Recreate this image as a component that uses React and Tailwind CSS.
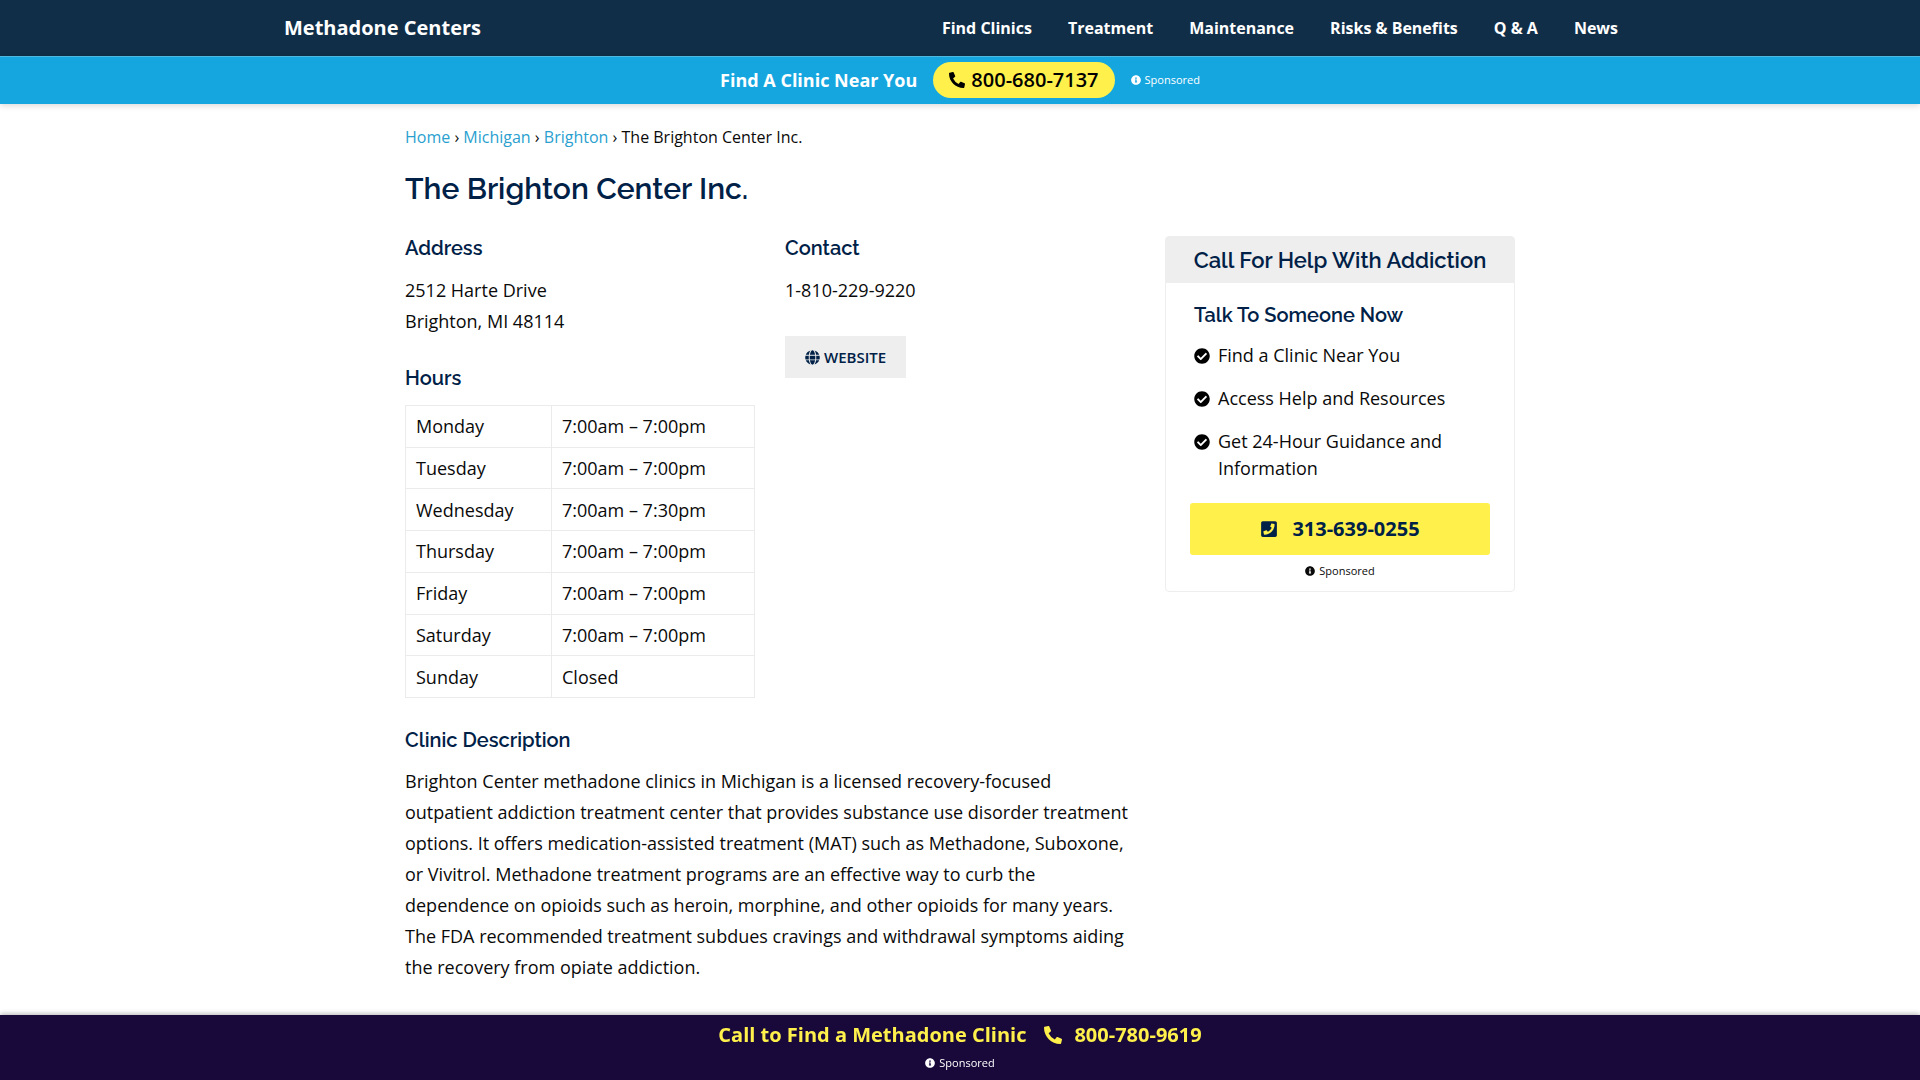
import { FaCheckCircle, FaGlobe, FaInfoCircle, FaPhoneAlt, FaPhoneSquare } from "react-icons/fa";

const navItems = ["Find Clinics", "Treatment", "Maintenance", "Risks & Benefits", "Q & A", "News"];
const crumbs = ["Home", "Michigan", "Brighton"];
const hours = [
  ["Monday", "7:00am – 7:00pm"],
  ["Tuesday", "7:00am – 7:00pm"],
  ["Wednesday", "7:00am – 7:30pm"],
  ["Thursday", "7:00am – 7:00pm"],
  ["Friday", "7:00am – 7:00pm"],
  ["Saturday", "7:00am – 7:00pm"],
  ["Sunday", "Closed"],
];
const benefits = ["Find a Clinic Near You", "Access Help and Resources", "Get 24-Hour Guidance and Information"];

function Sponsored({ className = "" }) {
  return (
    <a href="#sponsored" className={`inline-flex items-center gap-1 text-[11px] leading-4 ${className}`}>
      <FaInfoCircle className="size-[10px]" />
      Sponsored
    </a>
  );
}

function SectionTitle({ children, className = "" }) {
  return (
    <h2 className={`font-['Raleway',Lato,sans-serif] text-xl leading-6 font-semibold text-[#002147] ${className}`}>
      {children}
    </h2>
  );
}

function Header() {
  return (
    <header className="bg-[#112e48] text-white">
      <div className="mx-auto flex h-14 max-w-[1352px] items-center justify-between">
        <a href="#top" className="text-xl font-bold">Methadone Centers</a>
        <nav className="flex">
          {navItems.map((item) => (
            <a key={item} href="#nav" className="px-[18px] text-base font-bold">{item}</a>
          ))}
        </nav>
      </div>
    </header>
  );
}

function CallStrip() {
  return (
    <div className="flex h-12 items-center justify-center gap-4 border-t border-[#4fb8e0] bg-[#16a6df] pb-0.5 text-white shadow-[0_2px_6px_rgba(0,0,0,0.15)]">
      <span className="text-lg font-bold">Find A Clinic Near You</span>
      <a href="tel:8006807137" className="flex h-9 items-center gap-1.5 rounded-full bg-[#fff04b] px-4 text-xl font-semibold text-black">
        <FaPhoneAlt className="size-4" />
        800-680-7137
      </a>
      <Sponsored />
    </div>
  );
}

function HoursTable() {
  return (
    <table className="mt-[15px] h-[293px] w-full border-collapse text-lg leading-6">
      <tbody>
        {hours.map(([day, time]) => (
          <tr key={day}>
            <th scope="row" className="w-[146px] border border-[#ebebeb] px-2.5 text-left font-normal">{day}</th>
            <td className="border border-[#ebebeb] px-2.5">{time}</td>
          </tr>
        ))}
      </tbody>
    </table>
  );
}

function HelpCard() {
  return (
    <aside className="rounded border border-[#eeeeee]">
      <h2 className="flex h-[46px] items-center justify-center bg-[#eeeeee] font-['Raleway',Lato,sans-serif] text-[22px] font-semibold text-[#002147]">
        Call For Help With Addiction
      </h2>
      <div className="px-6 pt-5 pb-3">
        <SectionTitle className="px-1">Talk To Someone Now</SectionTitle>
        <ul className="mt-[15px] space-y-4 px-1 text-lg leading-[27px]">
          {benefits.map((text) => (
            <li key={text} className="flex gap-2">
              <FaCheckCircle className="mt-1.5 size-4 shrink-0 text-black" />
              <span>{text}</span>
            </li>
          ))}
        </ul>
        <a href="tel:3136390255" className="mt-[21px] flex h-[52px] items-center justify-center gap-3.5 rounded-[3px] bg-[#fff04b] text-xl font-bold text-[#002147]">
          <FaPhoneSquare className="size-[18px]" />
          313-639-0255
        </a>
        <div className="mt-2 flex justify-center">
          <Sponsored />
        </div>
      </div>
    </aside>
  );
}

export default function App() {
  return (
    <div className="min-h-screen bg-white pb-[65px] font-['Open_Sans',sans-serif] text-[#0a0a0a]">
      <Header />
      <CallStrip />
      <main className="mx-auto max-w-[1110px] pt-[21px]">
        <nav aria-label="Breadcrumb" className="text-base leading-6">
          {crumbs.map((crumb) => (
            <span key={crumb}>
              <a href="#crumb" className="text-[#2a9fd0]">{crumb}</a>
              {" › "}
            </span>
          ))}
          The Brighton Center Inc.
        </nav>
        <h1 className="mt-[22px] font-['Raleway',Lato,sans-serif] text-3xl leading-9 font-semibold text-[#002147]">
          The Brighton Center Inc.
        </h1>
        <div className="mt-[29px] grid grid-cols-3 items-start gap-x-[30px]">
          <div>
            <SectionTitle>Address</SectionTitle>
            <p className="mt-[15px] text-lg leading-[31px]">
              2512 Harte Drive
              <br />
              Brighton, MI 48114
            </p>
            <SectionTitle className="mt-[29px]">Hours</SectionTitle>
            <HoursTable />
          </div>
          <div>
            <SectionTitle>Contact</SectionTitle>
            <p className="mt-[15px] text-lg leading-[31px]">1-810-229-9220</p>
            <a href="#website" className="mt-[30px] inline-flex h-[42px] items-center gap-1 bg-[#eeeeee] px-5 text-[15px] font-semibold text-[#002147]">
              <FaGlobe className="size-[15px]" />
              WEBSITE
            </a>
          </div>
          <HelpCard />
          <section className="col-span-2 mt-[30px]">
            <SectionTitle>Clinic Description</SectionTitle>
            <p className="mt-[14px] text-lg leading-[31px]">
              Brighton Center methadone clinics in Michigan is a licensed recovery-focused outpatient addiction
              treatment center that provides substance use disorder treatment options. It offers
              medication-assisted treatment (MAT) such as Methadone, Suboxone, or Vivitrol. Methadone treatment
              programs are an effective way to curb the dependence on opioids such as heroin, morphine, and other
              opioids for many years. The FDA recommended treatment subdues cravings and withdrawal symptoms
              aiding the recovery from opiate addiction.
            </p>
          </section>
        </div>
      </main>
      <footer className="fixed inset-x-0 bottom-0 flex h-[65px] flex-col items-center bg-[#19093b] pt-1.5 shadow-[0_-1px_5px_rgba(0,0,0,0.3)]">
        <a href="tel:8007809619" className="flex items-center text-xl leading-7 font-bold text-[#fff04b]">
          Call to Find a Methadone Clinic
          <FaPhoneAlt className="mr-3 ml-[18px] size-[18px]" />
          800-780-9619
        </a>
        <Sponsored className="mt-1.5 text-white" />
      </footer>
    </div>
  );
}
